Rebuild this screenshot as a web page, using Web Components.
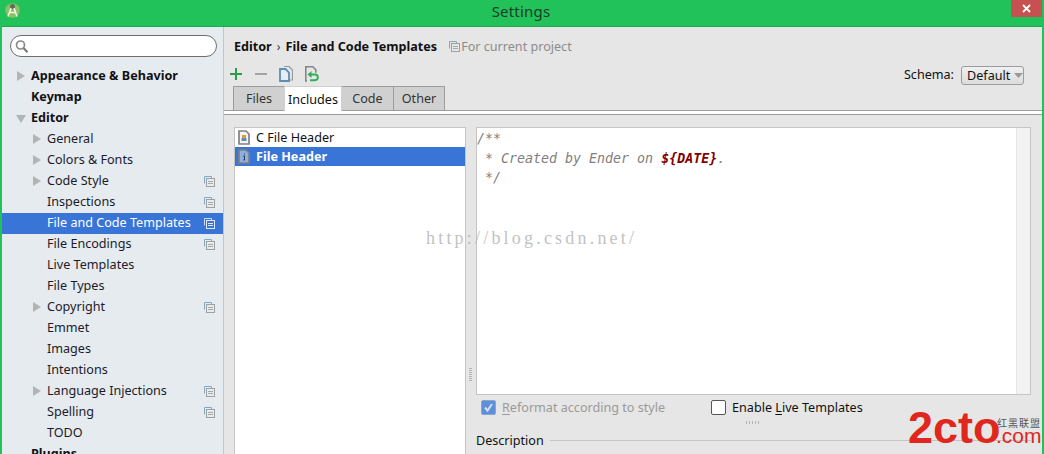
<!DOCTYPE html>
<html>
<head>
<meta charset="utf-8">
<title>Settings</title>
<style>
  html, body { margin: 0; height: 100%; overflow: hidden; }
  body { font-family: "Noto Sans", sans-serif; font-size: 12.6px; color: #111; }
</style>
</head>
<body>
<settings-window></settings-window>

<script>
const copyIcon = (back = "#7fa9c9", front = "#a0a0a0", line = "#a8a8a8") => `<svg width="11" height="11" viewBox="0 0 11 11" fill="none" style="display:block">
  <path d="M.5 7.500v-7h7v2" stroke="${back}"/>
  <rect x="2.500" y="2.500" width="8" height="8" stroke="${front}"/>
  <path d="M4 5.500h5M4 7.500h5" stroke="${line}"/>
</svg>`;

class TitleBar extends HTMLElement {
  constructor() {
    super();
    this.attachShadow({ mode: "open" }).innerHTML = `
    <style>
      :host { display: flex; align-items: center; justify-content: center; position: relative; height: 27px; flex: none; background: #21c25a; box-shadow: inset 0 -1px 0 #1fa950; }
      span { font: 15px "Noto Sans", sans-serif; color: #1d3b28; margin: -6px 0 0 -2px; letter-spacing: .2px; }
      svg { position: absolute; left: 3px; top: 3px; }
      .close { position: absolute; right: 0; top: 0; width: 31px; height: 17px; background: #c75050; display: flex; align-items: center; justify-content: center; }
      .close svg { position: static; }
    </style>
    <svg width="15" height="15" viewBox="0 0 15 15">
      <circle cx="7.500" cy="7.500" r="7.300" fill="#8cc063"/>
      <path d="M5 3.500a2.500 2.500 0 0 1 5 0V6H5z" fill="#5f6b58"/>
      <path d="M6 5 3 13.500M9 5l3 8.500M4.500 9.500h6" stroke="#f2f6ee" stroke-width="1.500" fill="none"/>
    </svg>
    <span>Settings</span>
    <div class="close"><svg width="9" height="9" viewBox="0 0 9 9"><path d="M1 1l7 7M8 1 1 8" stroke="#fff" stroke-width="1.800"/></svg></div>`;
  }
}

class SearchBox extends HTMLElement {
  constructor() {
    super();
    this.attachShadow({ mode: "open" }).innerHTML = `
    <style>
      :host { display: flex; align-items: center; box-sizing: border-box; height: 22px; margin: 8px 6px 9px 8px; padding-left: 4px; background: #fff; border: 1px solid #6e6e6e; border-radius: 11px; flex: none; }
    </style>
    <svg width="14" height="15" viewBox="0 0 14 15" fill="none">
      <circle cx="5.500" cy="6" r="4" stroke="#8a8a8a" stroke-width="1.700"/>
      <path d="M8.500 9l4 4.200" stroke="#7a7a7a" stroke-width="2.200"/>
    </svg>`;
  }
}

class TreeItem extends HTMLElement {
  constructor() {
    super();
    const arrow = this.getAttribute("arrow");
    const bold = this.getAttribute("level") === "0";
    const left = bold ? 29 : 45;
    const selected = this.hasAttribute("selected");
    let tri = "";
    if (arrow === "right") tri = `<svg class="tri" width="8" height="10" viewBox="0 0 8 10"><path d="M0 0l8 5-8 5z" fill="#b4b4b4"/></svg>`;
    if (arrow === "down") tri = `<svg class="tri" width="10" height="8" viewBox="0 0 10 8"><path d="M0 0h10l-5 8z" fill="#b4b4b4"/></svg>`;
    const icon = selected ? copyIcon("#c9dcf5", "#dfe8f5", "#dfe8f5") : copyIcon();
    this.attachShadow({ mode: "open" }).innerHTML = `
    <style>
      :host { display: flex; align-items: center; height: 21px; flex: none; padding-left: ${left}px; position: relative; color: #1b1b2a; }
      :host([selected]) { background: #3875d7; color: #fff; }
      .tri { position: absolute; left: ${left - 14 - (arrow === "down" ? 1 : 0)}px; top: ${arrow === "down" ? 7 : 5}px; }
      .label { font: ${bold ? "bold" : "normal"} 12.600px "Noto Sans", sans-serif; ${bold ? "color:#111;" : ""} white-space: nowrap; margin-top: -3px; }
      .copy { position: absolute; left: 202px; top: 5px; display: block; }
    </style>
    ${tri}<span class="label"><slot></slot></span>
    ${this.hasAttribute("project") ? `<span class="copy">${icon}</span>` : ""}`;
  }
}

class SettingsSidebar extends HTMLElement {
  constructor() {
    super();
    this.attachShadow({ mode: "open" }).innerHTML = `
    <style>
      :host { display: flex; flex-direction: column; width: 221px; flex: none; background: #e6ebf0; border-right: 1px solid #c4c4c4; overflow: hidden; }
    </style>
    <search-box></search-box>
    <tree-item level="0" arrow="right">Appearance &amp; Behavior</tree-item>
    <tree-item level="0">Keymap</tree-item>
    <tree-item level="0" arrow="down">Editor</tree-item>
    <tree-item arrow="right">General</tree-item>
    <tree-item arrow="right">Colors &amp; Fonts</tree-item>
    <tree-item arrow="right" project>Code Style</tree-item>
    <tree-item project>Inspections</tree-item>
    <tree-item selected project>File and Code Templates</tree-item>
    <tree-item project>File Encodings</tree-item>
    <tree-item>Live Templates</tree-item>
    <tree-item>File Types</tree-item>
    <tree-item arrow="right" project>Copyright</tree-item>
    <tree-item>Emmet</tree-item>
    <tree-item>Images</tree-item>
    <tree-item>Intentions</tree-item>
    <tree-item arrow="right" project>Language Injections</tree-item>
    <tree-item project>Spelling</tree-item>
    <tree-item>TODO</tree-item>
    <tree-item level="0">Plugins</tree-item>`;
  }
}

class TemplateToolbar extends HTMLElement {
  constructor() {
    super();
    this.attachShadow({ mode: "open" }).innerHTML = `
    <style>
      :host { display: flex; align-items: center; height: 24px; flex: none; padding-left: 6px; }
      svg { display: block; flex: none; }
      .schema { margin-left: auto; margin-right: 18px; margin-top: 2px; display: flex; align-items: center; gap: 7px; }
      .schema > span { margin-top: -2px; }
      .combo { display: flex; align-items: center; box-sizing: border-box; width: 63px; height: 19px; padding-left: 5px; gap: 4px; border: 1px solid #9c9c9c; border-radius: 3px; background: linear-gradient(#f0f0f0, #dcdcdc); }
    </style>
    <svg width="12" height="12" viewBox="0 0 12 12" style="margin-right:13px"><path d="M6 0v12M0 6h12" stroke="#2a9d4a" stroke-width="2"/></svg>
    <svg width="12" height="12" viewBox="0 0 12 12" style="margin-right:12px"><path d="M0 6h12" stroke="#a4a4a4" stroke-width="2"/></svg>
    <svg width="14" height="16" viewBox="0 0 14 16" fill="none" style="margin-right:12px">
      <path d="M5 .5h5l3.500 3.500v10H10" stroke="#999" stroke-width="1.200"/>
      <path d="M1 3h5.500L10 6.500V15H1z" stroke="#5b8db5" stroke-width="1.800" fill="#e4edf4"/>
    </svg>
    <svg width="14" height="16" viewBox="0 0 14 16" fill="none">
      <path d="M2 15H.8V.8h7l3 3v3" stroke="#858585" stroke-width="1.600"/>
      <path d="M5 8.500h5a2.800 2.800 0 0 1 0 5.700H5" stroke="#2fae56" stroke-width="1.900"/>
      <path d="M6.500 5 2.500 8.500 6.500 12z" fill="#2fae56"/>
    </svg>
    <div class="schema">
      <span>Schema:</span>
      <div class="combo"><span>Default</span><svg width="9" height="5" viewBox="0 0 9 5"><path d="M0 0h9L4.500 5z" fill="#9a9a9a"/></svg></div>
    </div>`;
  }
}

class TabStrip extends HTMLElement {
  constructor() {
    super();
    const tabs = [["Files", 52, 0], ["Includes", 58, 1], ["Code", 53, 0], ["Other", 52, 0]];
    this.attachShadow({ mode: "open" }).innerHTML = `
    <style>
      :host { display: block; flex: none; }
      .tabs { display: flex; height: 24px; margin-left: 9px; }
      .tab { box-sizing: border-box; display: flex; align-items: center; justify-content: center; border: 1px solid #9c9c9c; border-bottom: 0; margin-right: -1px; background: #d0d0d0; color: #333; }
      .tab.on { background: #fff; color: #111; border-color: #d0d0d0; position: relative; z-index: 1; height: 25px; }
      .rule { height: 3px; background: #fff; border-top: 1px solid #9c9c9c; border-bottom: 1px solid #9c9c9c; }
    </style>
    <div class="tabs">${tabs.map(t => `<div class="tab${t[2] ? " on" : ""}" style="width:${t[1]}px">${t[0]}</div>`).join("")}</div>
    <div class="rule"></div>`;
  }
}

class TemplateList extends HTMLElement {
  constructor() {
    super();
    const fileIcon = (fill, mark) => `<svg width="12" height="15" viewBox="0 0 12 15" fill="none">
      <path d="M1 1h7l3 3v10H1z" fill="${fill}" stroke="#808080" stroke-width="1.700"/>
      ${mark}</svg>`;
    this.attachShadow({ mode: "open" }).innerHTML = `
    <style>
      :host { display: block; width: 230px; flex: none; margin-left: 10px; background: #fff; border: 1px solid #c4c4c4; border-bottom: 0; }
      .row { display: flex; align-items: center; gap: 6px; height: 19px; padding-left: 3px; color: #111; }
      .row svg { display: block; flex: none; }
      .row.on { background: #3875d7; color: #fff; font-weight: bold; }
    </style>
    <div class="row">${fileIcon("#f5f5f5", '<rect x="4" y="5" width="4" height="3" fill="#e39b2d"/><rect x="3.500" y="8" width="5" height="3" fill="#5a8fc4"/>')}<span>C File Header</span></div>
    <div class="row on">${fileIcon("#8fb0dc", '<path d="M6.500 4.500v1M5 7h1.500v4H5" stroke="#1f3f7a"/>')}<span>File Header</span></div>`;
  }
}

class CodeEditor extends HTMLElement {
  constructor() {
    super();
    this.attachShadow({ mode: "open" }).innerHTML = `
    <style>
      :host { display: flex; box-sizing: border-box; height: 268px; flex: none; background: #fff; border: 1px solid #c4c4c4; }
      .code { flex: 1; padding-top: 1px; font: italic 13.300px/19.500px "DejaVu Sans Mono", monospace; color: #808080; white-space: pre; }
      b { color: #800000; font-weight: bold; }
      .gutter { width: 13px; background: #f2f2f2; border-left: 1px solid #e6e6e6; }
    </style>
    <div class="code"><div>/**</div><div> * Created by Ender on <b>\${DATE}</b>.</div><div> */</div></div>
    <div class="gutter"></div>`;
  }
}

class EditorOptions extends HTMLElement {
  constructor() {
    super();
    this.attachShadow({ mode: "open" }).innerHTML = `
    <style>
      :host { display: flex; align-items: center; height: 24px; flex: none; padding-left: 5px; }
      .box { box-sizing: border-box; width: 15px; height: 15px; border-radius: 2px; flex: none; display: flex; }
      .checked { background: #5f8fd8; border: 1px solid #8aa6cf; }
      .empty { background: #fff; border: 1px solid #555; }
      .off { color: #9a9a9a; margin: 0 46px 0 6px; }
      .live { color: #111; margin: 0 0 0 6px; }
      u { text-underline-offset: 2px; }
    </style>
    <div class="box checked"><svg width="13" height="13" viewBox="0 0 13 13"><path d="M3 6.500l2.500 3L10 3" fill="none" stroke="#d4e0f2" stroke-width="2"/></svg></div>
    <span class="off"><u>R</u>eformat according to style</span>
    <div class="box empty"></div>
    <span class="live">Enable <u>L</u>ive Templates</span>`;
  }
}

class TemplatePane extends HTMLElement {
  constructor() {
    super();
    this.attachShadow({ mode: "open" }).innerHTML = `
    <style>
      :host { display: flex; flex-direction: column; flex: 1; min-width: 0; background: #e6e6e6; position: relative; overflow: hidden; }
      .crumb { display: flex; align-items: center; height: 35px; flex: none; padding: 3px 0 0 10px; gap: 5px; box-sizing: border-box; }
      .crumb b { color: #111; }
      .crumb .sep { color: #333; font-size: 12px; }
      .crumb .hint { color: #8c8c8c; display: flex; align-items: center; gap: 1px; margin-left: 7px; }
      .body { display: flex; flex: 1; margin-top: 12px; min-height: 0; }
      .split { position: relative; width: 10px; flex: none; }
      .grip { position: absolute; width: 3px; height: 14px; background: repeating-linear-gradient(#b4b4b4 0 1px, transparent 1px 2px); }
      .right { flex: none; width: 555px; display: flex; flex-direction: column; position: relative; }
      .desc { display: flex; align-items: center; gap: 6px; height: 20px; margin-top: 12px; }
      .desc span { margin-top: -2px; }
      .desc i { flex: 1; border-top: 1px solid #c4c4c4; margin-top: -1px; }
      .hgrip { position: absolute; left: 270px; top: 294px; width: 15px; height: 3px; background: repeating-linear-gradient(90deg, #b4b4b4 0 1px, transparent 1px 3px); }
    </style>
    <div class="crumb"><b>Editor</b><span class="sep">&#8250;</span><b>File and Code Templates</b><span class="hint">${copyIcon()}<span>For current project</span></span></div>
    <template-toolbar></template-toolbar>
    <tab-strip></tab-strip>
    <div class="body">
      <template-list></template-list>
      <div class="split"><div class="grip" style="left:3px;top:241px"></div></div>
      <div class="right">
        <code-editor></code-editor>
        <editor-options></editor-options>
        <div class="hgrip"></div>
        <div class="desc"><span>Description</span><i></i></div>
      </div>
    </div>`;
  }
}

class WaterMarks extends HTMLElement {
  constructor() {
    super();
    this.attachShadow({ mode: "open" }).innerHTML = `
    <style>
      :host { display: block; position: absolute; inset: 0; pointer-events: none; overflow: hidden; }
      .csdn { position: absolute; left: 426px; top: 227px; font: 18px/22px "Liberation Serif", serif; letter-spacing: 3.200px; color: #b8b8b8; opacity: .85; white-space: nowrap; }
      .logo { position: absolute; left: 908px; top: 407px; color: #e0271e; white-space: nowrap; }
      .two { position: absolute; left: 0; top: 0; font: bold 45px/42px "Liberation Sans", sans-serif; }
      .cn { position: absolute; left: 89px; top: 11px; font: 10px/10px "Noto Sans CJK SC", sans-serif; color: #555; letter-spacing: 1px; }
      .com { position: absolute; left: 88px; top: 22px; font: 21px/14px "Liberation Sans", sans-serif; }
    </style>
    <div class="csdn">http://blog.csdn.net/</div>
    <div class="logo"><span class="two">2cto</span><span class="cn">红黑联盟</span><span class="com">.com</span></div>`;
  }
}

class SettingsWindow extends HTMLElement {
  constructor() {
    super();
    this.attachShadow({ mode: "open" }).innerHTML = `
    <style>
      :host { display: flex; flex-direction: column; box-sizing: border-box; width: 1044px; height: 454px; padding: 0 2px; background: #21c25a; position: relative; overflow: hidden; }
      .content { display: flex; flex: 1; min-height: 0; }
    </style>
    <title-bar></title-bar>
    <div class="content">
      <settings-sidebar></settings-sidebar>
      <template-pane></template-pane>
    </div>
    <water-marks></water-marks>`;
  }
}

customElements.define("title-bar", TitleBar);
customElements.define("search-box", SearchBox);
customElements.define("tree-item", TreeItem);
customElements.define("settings-sidebar", SettingsSidebar);
customElements.define("template-toolbar", TemplateToolbar);
customElements.define("tab-strip", TabStrip);
customElements.define("template-list", TemplateList);
customElements.define("code-editor", CodeEditor);
customElements.define("editor-options", EditorOptions);
customElements.define("template-pane", TemplatePane);
customElements.define("water-marks", WaterMarks);
customElements.define("settings-window", SettingsWindow);
</script>
</body>
</html>
